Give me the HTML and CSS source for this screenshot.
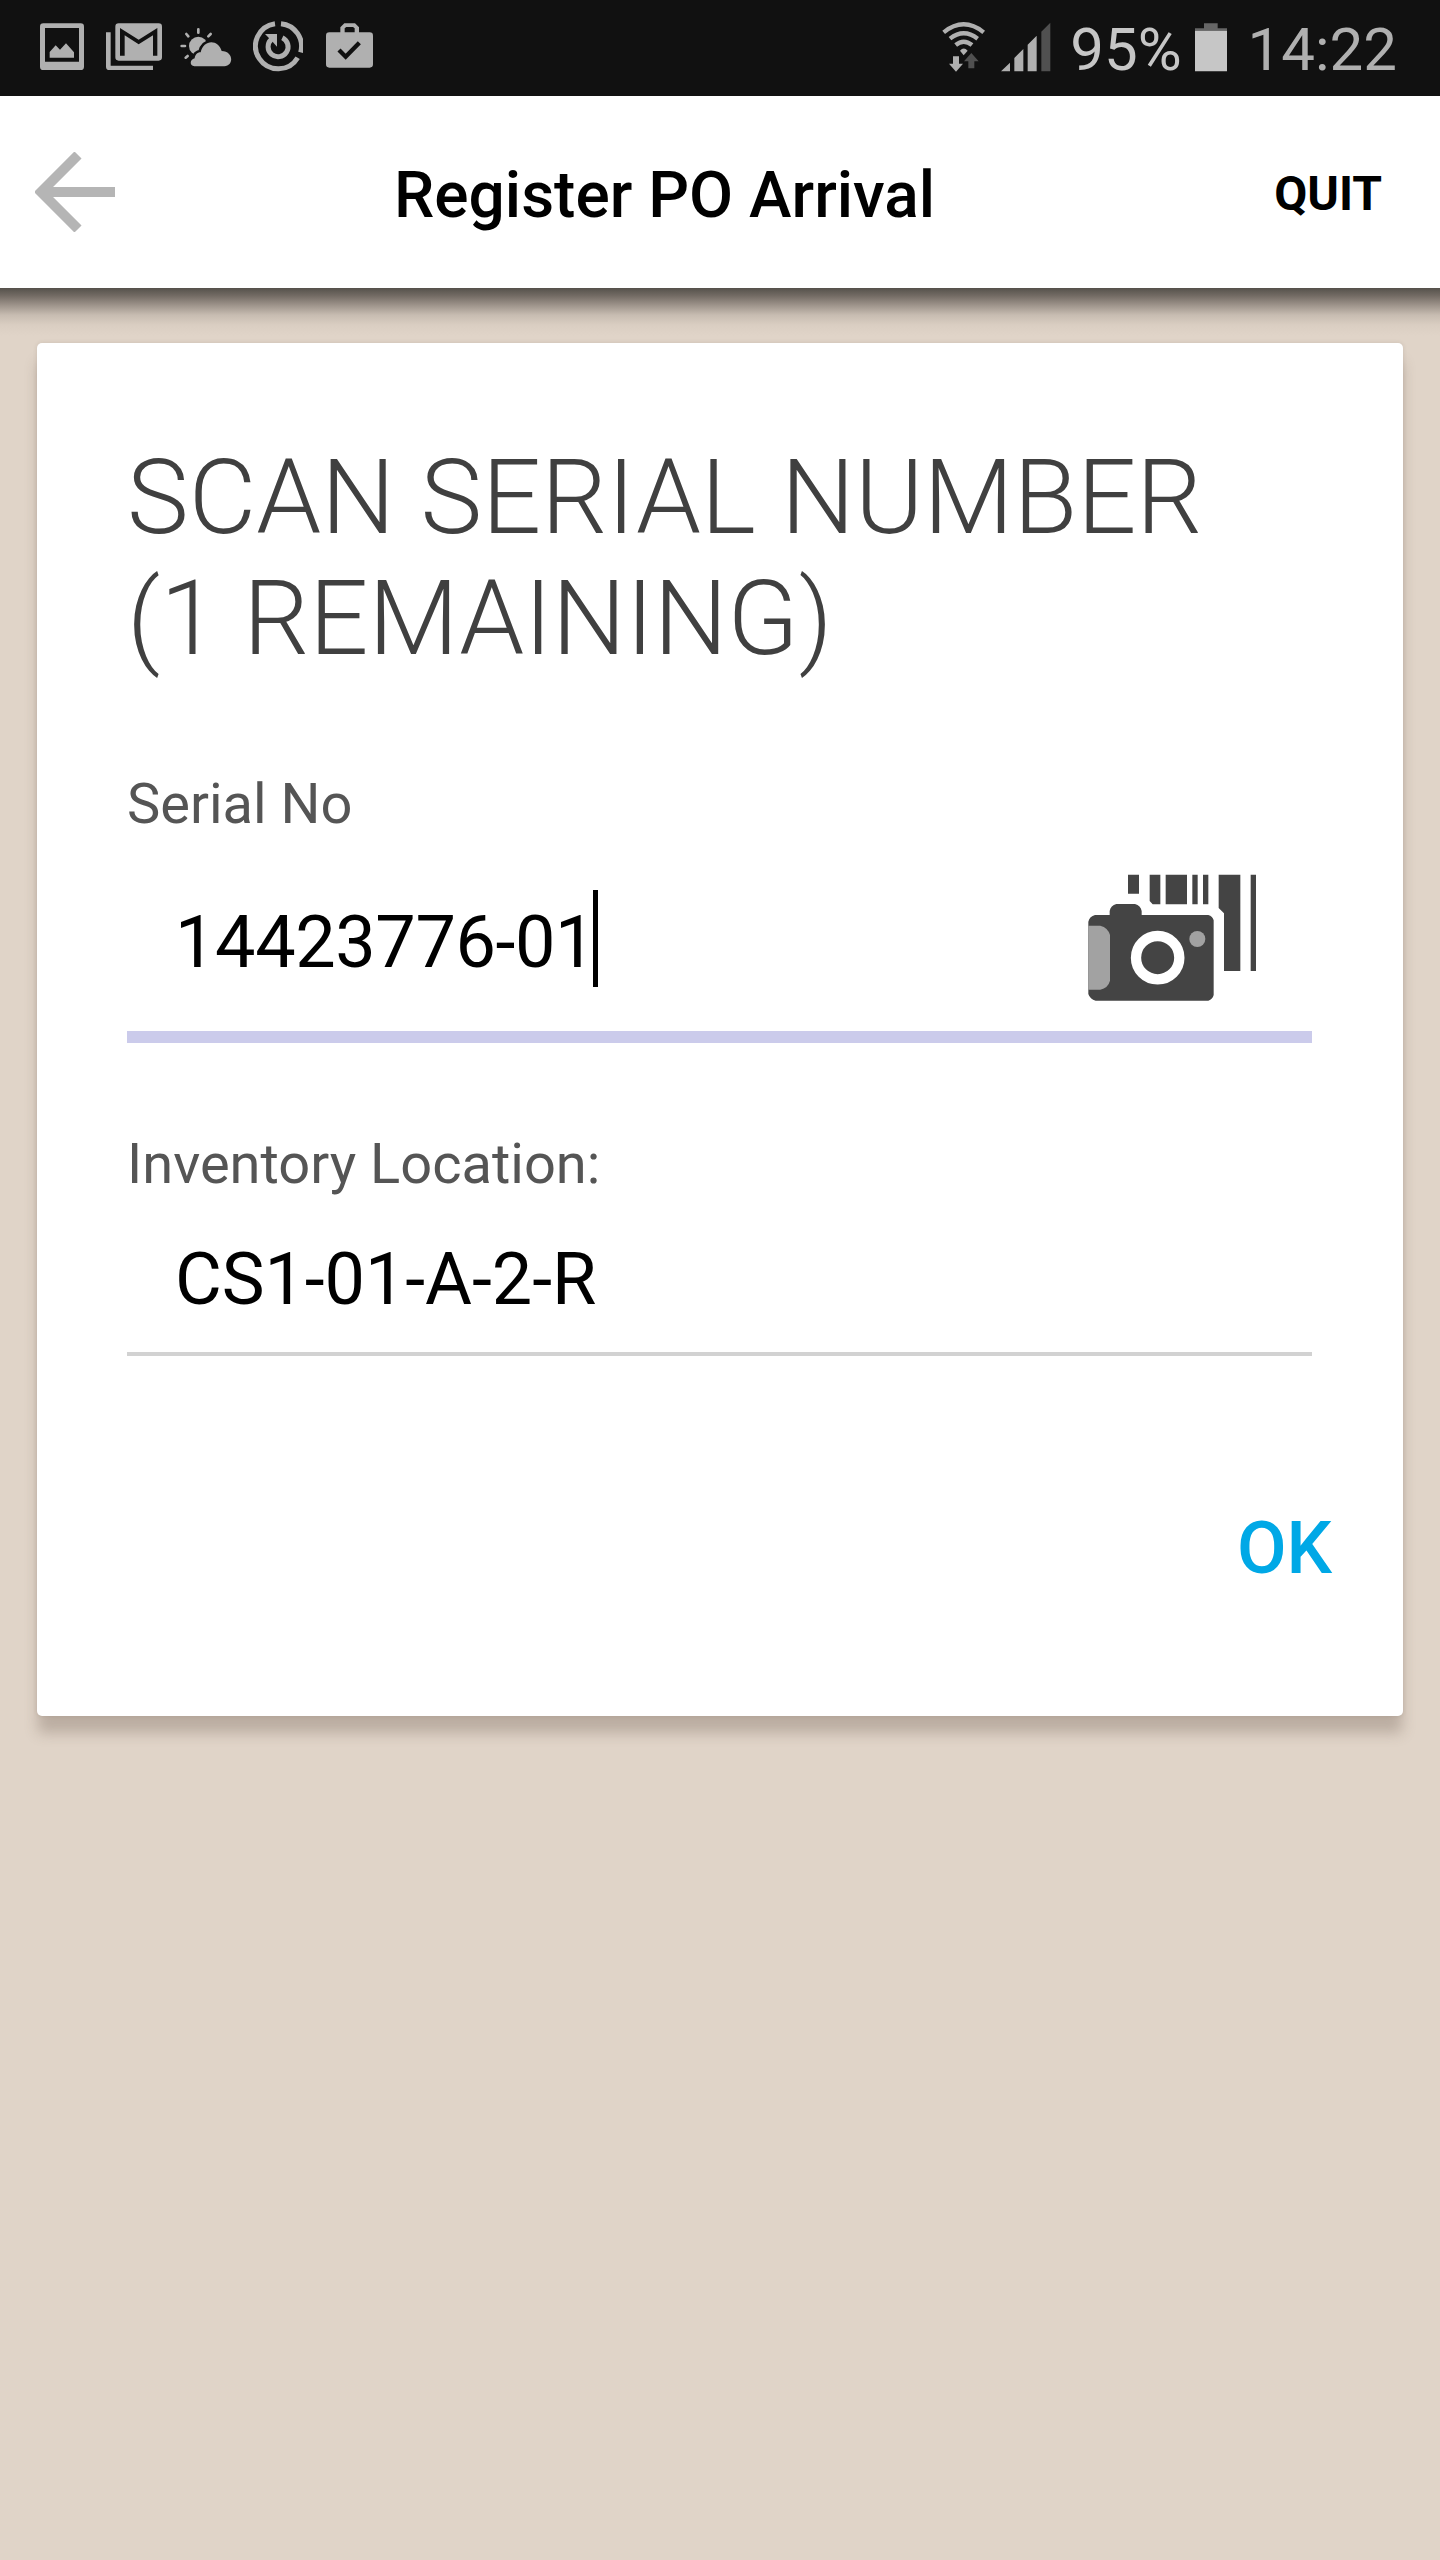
FILE: index.html
```html
<!DOCTYPE html>
<html lang="en">
<head>
    <meta charset="UTF-8">
    <meta name="viewport" content="width=device-width, initial-scale=1.0">
    <title>Register PO Arrival</title>
    <link rel="stylesheet" href="styles.css">
</head>
<body>

<div class="status-bar">
    <div class="notifications">
        <!-- Gallery -->
        <svg width="44" height="48" viewBox="120 70 132 144">
            <path fill-rule="evenodd" d="M130 71h112q10 0 10 10v120q0 10-10 10H130q-10 0-10-10V81q0-10 10-10zM135 85v101h102V85z"/>
            <path d="M149 174v-17l18-20 13 13 18-19 24 27v16z"/>
        </svg>
        <!-- Mail -->
        <svg width="56" height="48" viewBox="318 70 168 144">
            <path d="M318 98h14v100h127v13H328q-10 0-10-10z"/>
            <path fill-rule="evenodd" d="M356 71h120q10 0 10 10v92q0 10-10 10H356q-10 0-10-10V81q0-10 10-10zM360 85v83h14v-61l42 27 43-27v61h13V85l-56 35z"/>
        </svg>
        <!-- Weather -->
        <svg class="weather" width="52" height="48" viewBox="540 70 156 144">
            <path class="rays" d="M595 89v10M559 103l6 7M632 103l-7 7M545 139h10M557 174l6-5"/>
            <circle cx="595" cy="139" r="28"/>
            <path class="cloud" d="M583 200c-16-2-13-21 1-24 1-10 7-18 18-18 8-39 53-40 63-4 35 0 38 44 8 46z"/>
        </svg>
        <!-- Data sync -->
        <svg width="50" height="52" viewBox="759 65 150 156">
            <path class="ring" d="M825 73A68 68 0 1 0 893 175M843 73A68 68 0 0 1 902 159"/>
            <path class="ring" d="M814 120A30 30 0 1 0 847 115"/>
            <path d="M795 104h36v38l-12-13z"/>
        </svg>
        <!-- Work -->
        <svg class="work" width="47" height="48" viewBox="980 70 141 144">
            <path fill-rule="evenodd" d="M990 98h33V83l12-12h32l12 12v15h32q10 0 10 10v86q0 10-10 10H990q-10 0-10-10v-86q0-10 10-10zM1036 98h30V86l-5-4h-20l-5 4z"/>
            <path class="tick" d="M1019 151l20 20 41-42"/>
        </svg>
    </div>
    <div class="system">
        <!-- Wifi -->
        <svg class="wifi" width="44" height="50" viewBox="68 65 132 150">
            <path class="wave" d="M73 96Q133 48 193 96M92 115Q133 83 175 115M109 134Q133 114 158 134"/>
            <path d="M122 151q11-13 23 0l-12 14z"/>
            <path d="M101 168h18v22h12l-21 24-21-24h12z"/>
            <path class="dim" d="M147 204h18v-21h13l-22-25-22 25h13z"/>
        </svg>
        <!-- Signal -->
        <svg class="signal" width="50" height="50" viewBox="245 65 150 150">
            <path d="M245 213l27-26v26zM285 213v-40l27-27v67zM325 213v-80l27-27v107z"/>
            <path class="dim" d="M366 213V94l27-27v146z"/>
        </svg>
        <span class="percent">95%</span>
        <!-- Battery -->
        <svg class="battery" width="32" height="50" viewBox="825 65 96 150">
            <path class="cap" d="M852 69h41v15h28v7h-96v-7h27z"/>
            <path d="M825 91h96v122h-96z"/>
        </svg>
        <span class="time">14:22</span>
    </div>
</div>

<header class="header">
    <svg class="back" width="80" height="80" viewBox="0 0 80 80">
        <path d="M43 3L6 40l37 37M6 40h74"/>
    </svg>
    <h1 class="title">Register PO Arrival</h1>
    <span class="quit">QUIT</span>
</header>

<main class="card">
    <h2 class="heading">SCAN SERIAL NUMBER<br>(1 REMAINING)</h2>

    <div class="label">Serial No</div>
    <div class="field field-active">
        <span class="value">14423776-01</span>
        <span class="caret"></span>
        <svg class="scan" width="170" height="128" viewBox="84 72 510 384">
            <path d="M204 74h33v57h-33zM269 74h32v89h-23l-9-10zM317 74h64v89h-64zM397 74h16v89h-16zM429 74h16v89h-16zM476 74h65v289h-49V190l-16-16zM572 74h16v289h-16z"/>
            <path d="M105 195h44v-12q3-16 20-21h56q17 5 20 21v12h200q13 4 16 16v224q-3 13-16 17H107q-17-4-22-20V215q4-16 20-20z"/>
            <path class="grip" d="M85 227h36q23 6 29 28v137q-6 22-29 27H85z"/>
            <circle class="lens" cx="293" cy="323" r="65"/>
            <circle class="grip" cx="412" cy="267" r="24"/>
        </svg>
    </div>

    <div class="label">Inventory Location:</div>
    <div class="field">
        <span class="value">CS1-01-A-2-R</span>
    </div>

    <div class="actions">
        <span class="ok">OK</span>
    </div>
</main>

</body>
</html>
```
FILE: styles.css
```css
body {
    font-family: Roboto, sans-serif;
    background-color: #e0d4c8;
    margin: 0;
    padding: 0;
    height: 2560px;
    color: #000;
}

svg {
    display: block;
    flex-shrink: 0;
}

/* Status bar */
.status-bar {
    display: flex;
    justify-content: space-between;
    height: 96px;
    background-color: #111;
    box-sizing: border-box;
    padding: 0 43px 2px 40px;
}

.notifications {
    display: flex;
    align-items: center;
    fill: #b0b0b0;
    gap: 22px;
}

.weather {
    margin: 0 -1px 0 -4px;
}

.work {
    margin-left: 1px;
}

.rays {
    stroke: #b0b0b0;
    stroke-width: 8;
    stroke-linecap: round;
}

.cloud {
    stroke: #111;
    stroke-width: 16;
    paint-order: stroke;
}

.ring {
    fill: none;
    stroke: #b0b0b0;
    stroke-width: 15;
}

.tick {
    fill: none;
    stroke: #111;
    stroke-width: 13;
}

.system {
    display: flex;
    align-items: center;
    fill: #b0b0b0;
    font-size: 60px;
    line-height: 70px;
}

.wave {
    fill: none;
    stroke: #b0b0b0;
    stroke-width: 13;
}

.dim {
    fill: #505050;
}

.signal {
    margin-left: 15px;
}

.percent {
    color: #c6c6c6;
    margin-left: 19px;
    padding-top: 5px;
}

.battery {
    fill: #c6c6c6;
    margin-left: 13px;
}

.battery .cap {
    fill: #666;
}

.time {
    color: #b0b0b0;
    margin-left: 21px;
    padding-top: 5px;
}

/* Header */
.header {
    position: relative;
    display: flex;
    align-items: center;
    height: 192px;
    background-color: #fff;
    box-sizing: border-box;
    padding: 0 58px 0 35px;
}

.header::after {
    content: "";
    position: absolute;
    top: 100%;
    left: 0;
    right: 0;
    height: 48px;
    background: linear-gradient(#55514b, #746c65 8px, #a1978e 18px, #c7bcb1 27px, #dacec2 37px, #e0d4c8);
}

.back {
    fill: none;
    stroke: #b5b5b5;
    stroke-width: 10;
}

.title {
    flex: 1;
    margin: 0;
    padding: 8px 0 0 279px;
    font-size: 64px;
    font-weight: 500;
    line-height: 76px;
}

.quit {
    padding-top: 2px;
    font-size: 48px;
    font-weight: 700;
}

/* Card */
.card {
    margin: 55px 37px 0;
    height: 1373px;
    box-sizing: border-box;
    padding: 94px 91px 0 90px;
    background-color: #fff;
    border-radius: 5px;
    box-shadow: 0 18px 14px -1px rgba(90, 70, 60, 0.27), 0 0 4px rgba(90, 70, 55, 0.15);
    position: relative;
}

.heading {
    margin: 0 0 92px;
    color: #404040;
    font-size: 104px;
    font-weight: 300;
    line-height: 121px;
    white-space: nowrap;
}

.label {
    color: #555;
    font-size: 56px;
    line-height: 66px;
}

.field {
    display: flex;
    align-items: center;
    height: 153px;
    padding: 2px 54px 0 48px;
    border-bottom: 4px solid #d2d2d2;
}

.field-active {
    height: 185px;
    padding-top: 9px;
    border-bottom: 12px solid #cbcbeb;
    margin-bottom: 88px;
}

.value {
    padding-top: 8px;
    font-size: 72px;
    line-height: 84px;
    letter-spacing: -0.1px;
}

.field-active .value {
    letter-spacing: -0.4px;
}

.caret {
    width: 5px;
    height: 97px;
    margin-left: -2px;
    background-color: #000;
}

.scan {
    fill: #444;
    margin: 0 0 2px auto;
}

.grip {
    fill: #a2a2a2;
}

.lens {
    fill: #444;
    stroke: #fff;
    stroke-width: 31;
}

.actions {
    display: flex;
    justify-content: flex-end;
    margin: 151px -20px 0 0;
}

.ok {
    color: #00a8e6;
    font-size: 72px;
    font-weight: 500;
    line-height: 84px;
}
```
